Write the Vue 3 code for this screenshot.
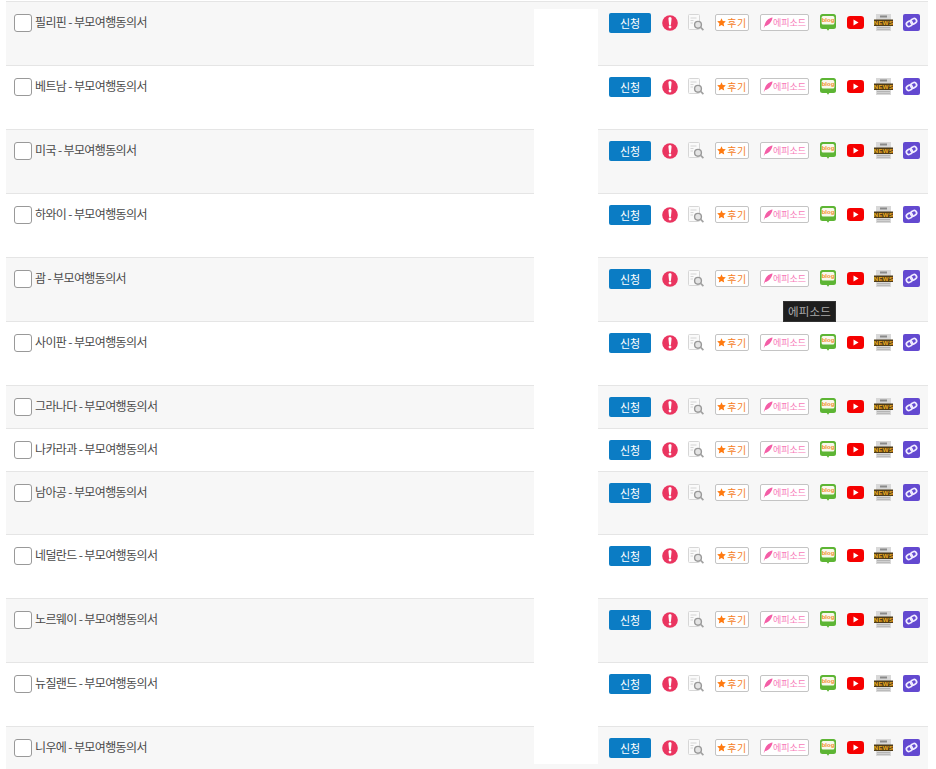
<script setup>
const names = [
  ['필리핀', 64], ['베트남', 64], ['미국', 64], ['하와이', 64], ['괌', 64], ['사이판', 64],
  ['그라나다', 43], ['나카라과', 43], ['남아공', 63], ['네덜란드', 64], ['노르웨이', 64], ['뉴질랜드', 64], ['니우에', 64],
]
</script>

<template>
  <div class="page">
    <div class="list">
      <div v-for="(r, i) in names" :key="r[0]" class="row" :class="{ odd: i % 2 === 0 }" :style="{ height: r[1] + 'px' }">
        <div class="name">
          <span class="check"></span>
          <span class="label">{{ r[0] }} - 부모여행동의서</span>
        </div>
        <div class="actions">
          <button class="apply">신청</button>
          <svg class="alert" width="16" height="16" viewBox="0 0 16 16">
            <circle cx="8" cy="8" r="7.8" fill="#ea3560" />
            <path d="M6.4 3.6a1.6 1.6 0 0 1 3.2 0L9 9.2a1 1 0 0 1-2 0z" fill="#fff" />
            <circle cx="8" cy="12" r="1.4" fill="#fff" />
          </svg>
          <svg class="doc" width="16" height="17" viewBox="0 0 16 17">
            <rect x="0.5" y="0.5" width="11" height="15" rx="1" fill="#fafafa" stroke="#d6d6d6" />
            <path d="M2.5 4h6M2.5 6.5h3M2.5 9h2.5" stroke="#d4d4d4" fill="none" />
            <circle cx="10" cy="10.8" r="3.4" fill="#e4e4e4" stroke="#999" stroke-width="1.4" />
            <path d="M12.4 13.2l3 3" stroke="#a2a2a2" stroke-width="1.7" />
          </svg>
          <span class="tag review"><svg width="9" height="9" viewBox="0 0 10 10"><path d="M5 .2l1.4 3.1 3.4.4-2.5 2.3.7 3.4L5 7.7 2 9.4l.7-3.4L.2 3.7l3.4-.4z" fill="#ff7a10" /></svg><span>후기</span></span>
          <span class="tag episode"><svg width="10" height="12" viewBox="0 0 10 12"><path d="M9.6.4C5.4 1 2.6 4 1.6 8L.6 11.6l1.5-2.7C6 8.4 8.6 5 9.6.4z" fill="#f45da6" /></svg><span>에피소드</span></span>
          <svg class="blog" width="16" height="17" viewBox="0 0 16 17">
            <rect width="16" height="15" rx="2.5" fill="#5db534" />
            <path d="M6 14h4L8 16.8z" fill="#5db534" />
            <rect x="1.6" y="2" width="12.8" height="8.6" rx="1.5" fill="#f8f8ec" />
            <text x="8" y="8.4" text-anchor="middle" class="blogtext">blog</text>
          </svg>
          <svg class="yt" width="17" height="13" viewBox="0 0 17 13">
            <rect width="17" height="13" rx="3.2" fill="#f60000" />
            <path d="M6.5 3.5l5 3-5 3z" fill="#fff" />
          </svg>
          <svg class="news" width="19" height="17" viewBox="0 0 19 17">
            <rect x="2" y="0" width="15" height="17" fill="#d8d8d8" />
            <rect x="6" y="1.5" width="7" height="2" fill="#8a8a8a" />
            <path d="M3 13.5h13M3 15.3h13" stroke="#b4b4b4" />
            <rect x="0" y="5.5" width="19" height="6.5" fill="#4e3c1a" />
            <text x="9.5" y="10.8" text-anchor="middle" class="newstext">NEWS</text>
          </svg>
          <svg class="link" width="17" height="17" viewBox="0 0 17 17">
            <rect width="17" height="17" rx="2" fill="#6349d0" />
            <g fill="none" stroke="#f0ecff" stroke-width="1.7" transform="rotate(-30 8.5 8.5)">
              <rect x="3" y="6.1" width="6.2" height="4.8" rx="2.4" />
              <rect x="7.8" y="6.1" width="6.2" height="4.8" rx="2.4" />
            </g>
          </svg>
        </div>
      </div>
    </div>
    <div class="blank"></div>
    <div class="tooltip">에피소드</div>
  </div>
</template>

<style>
html, body { margin: 0; background: #fff; }
</style>

<style scoped>
.page {
  position: relative;
  width: 936px;
  height: 769px;
  overflow: hidden;
  background: #fff;
  font-family: "Noto Sans CJK KR", "Noto Sans", sans-serif;
}
.list {
  margin-left: 6px;
  width: 922px;
  padding-top: 1px;
}
.row {
  display: flex;
  justify-content: space-between;
  box-sizing: border-box;
  border-top: 1px solid #e5e5e5;
  background: #fff;
}
.row.odd { background: #f7f7f7; }
.name {
  display: flex;
  align-items: flex-start;
  padding: 11px 0 0 8px;
  gap: 3px;
}
.check {
  box-sizing: border-box;
  width: 18px;
  height: 18px;
  margin-top: 1px;
  border: 1.5px solid #999;
  border-radius: 3px;
  background: #fff;
}
.label {
  font-size: 12px;
  line-height: 18px;
  color: #4a4a4a;
  letter-spacing: -0.62px;
  white-space: nowrap;
}
.actions {
  display: flex;
  align-items: flex-start;
  align-self: flex-start;
  height: 20px;
  margin-top: 11px;
  padding-right: 8px;
}
.apply {
  width: 42px;
  height: 20px;
  padding: 0;
  border: 0;
  border-radius: 2px;
  background: #0b7cc4;
  color: #fff;
  font: 11px "Noto Sans CJK KR", sans-serif;
}
.actions svg { flex: none; display: block; }
.alert { margin: 2px 0 0 11px; }
.doc { margin: 1px 0 0 10px; }
.tag {
  box-sizing: border-box;
  display: flex;
  align-items: center;
  justify-content: center;
  height: 17px;
  margin-top: 1px;
  border: 1px solid #c4c4c4;
  border-radius: 2px;
  background: #fff;
  white-space: nowrap;
}
.review { width: 34px; margin-left: 11px; color: #f5801e; gap: 1px; font-size: 10px; letter-spacing: 0.6px; }
.episode { width: 49px; margin-left: 11px; color: #f77bb8; gap: 0; font-size: 9px; letter-spacing: 0; }
.blog { margin: 1px 0 0 11px; }
.blogtext { font: bold 6px "Liberation Sans", sans-serif; fill: #f0902a; }
.yt { margin: 3px 0 0 11px; }
.news { margin: 1px 0 0 10px; }
.newstext { font: bold 6px "Liberation Sans", sans-serif; fill: #f0b020; letter-spacing: 0.4px; }
.link { margin: 1px 0 0 10px; }
.blank {
  position: absolute;
  left: 534px;
  top: 9px;
  width: 64px;
  height: 755px;
  background: #fff;
}
.tooltip {
  position: absolute;
  box-sizing: border-box;
  left: 783px;
  top: 301px;
  width: 53px;
  height: 21px;
  border: 1px solid #333;
  background: #1e1e1e;
  color: #aaa;
  font-size: 11.5px;
  line-height: 19px;
  text-align: center;
  letter-spacing: 0.2px;
}
</style>
